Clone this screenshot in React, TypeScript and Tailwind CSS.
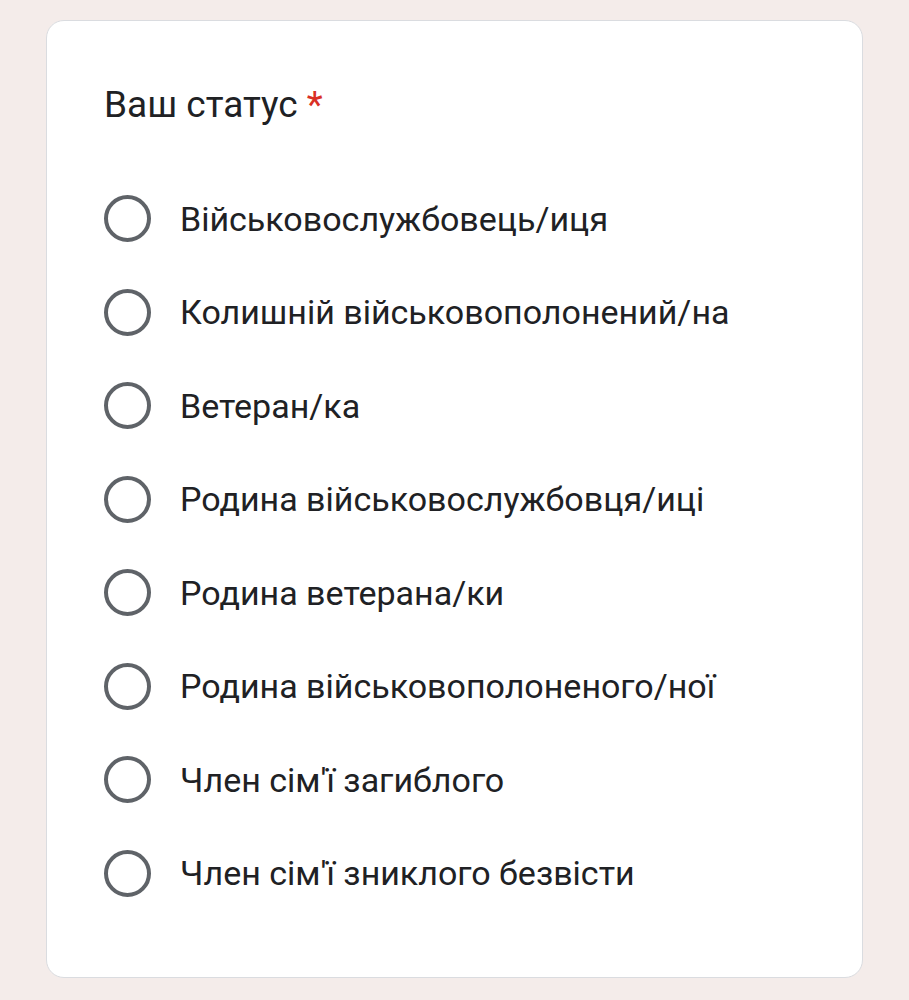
import React from "react";

const options = [
  "Військовослужбовець/иця",
  "Колишній військовополонений/на",
  "Ветеран/ка",
  "Родина військовослужбовця/иці",
  "Родина ветерана/ки",
  "Родина військовополоненого/ної",
  "Член сім'ї загиблого",
  "Член сім'ї зниклого безвісти",
];

export default function App() {
  return (
    <div
      className="w-[909px] h-[1000px] bg-[#f4ecea] pt-[20px] pl-[46px]"
      style={{ fontFamily: "Roboto, 'Noto Sans', sans-serif" }}
    >
      <div className="w-[817px] h-[958px] bg-white rounded-[18px] border border-[#dadce0] pt-[64px] pl-[57px]">
        <div className="text-[37px] leading-[40px] text-[#202124]">
          Ваш статус <span className="text-[#d93025]">*</span>
        </div>
        <div className="mt-[47px] flex flex-col">
          {options.map((o) => (
            <div key={o} className="h-[93.5px] flex items-center">
              <div className="w-[47px] h-[47px] rounded-full border-[4px] border-[#5f6368] shrink-0" />
              <div className="ml-[29px] text-[34px] leading-[40px] text-[#202124]">
                {o}
              </div>
            </div>
          ))}
        </div>
      </div>
    </div>
  );
}
